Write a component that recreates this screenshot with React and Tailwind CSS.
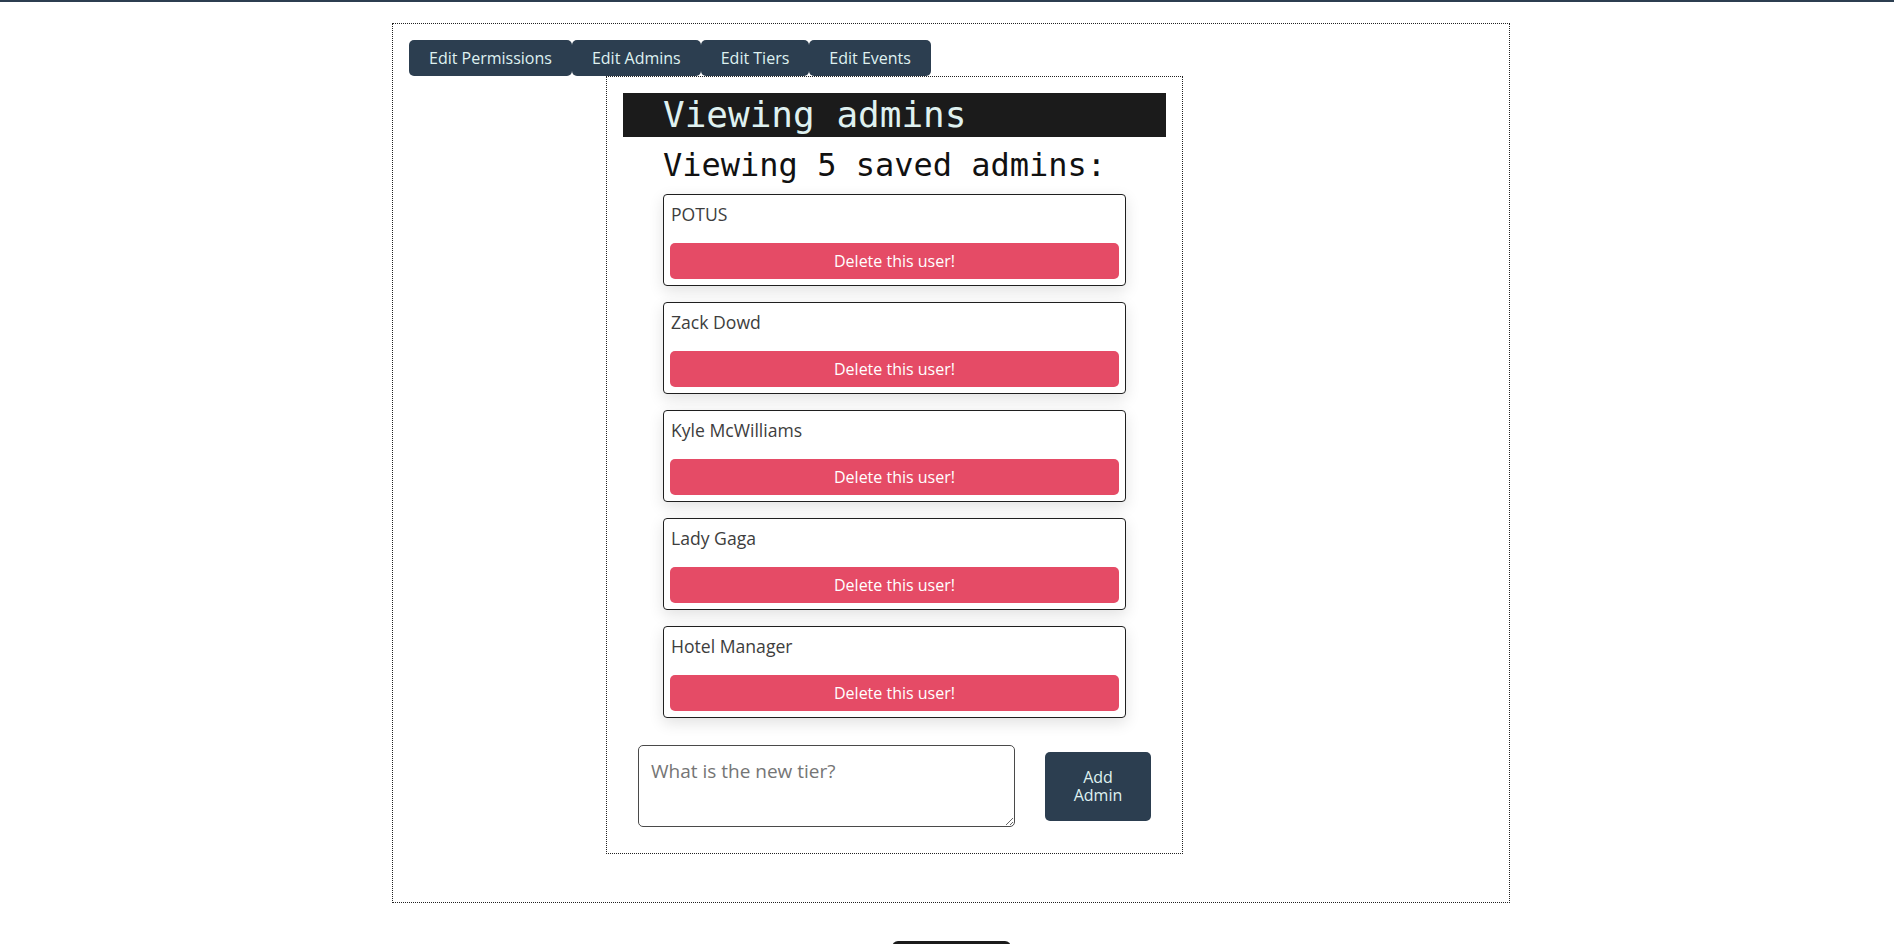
import { useState } from 'react';

const admins = ['POTUS', 'Zack Dowd', 'Kyle McWilliams', 'Lady Gaga', 'Hotel Manager'];
const tabs = ['Edit Permissions', 'Edit Admins', 'Edit Tiers', 'Edit Events'];

const App = () => {
  const [users, setUsers] = useState(admins);
  const [newAdmin, setNewAdmin] = useState('');

  const deleteUser = (name) => setUsers(users.filter(u => u !== name));

  const addAdmin = () => {
    if (!newAdmin.trim()) return;
    setUsers([...users, newAdmin.trim()]);
    setNewAdmin('');
  };

  return (
    <div className="min-h-screen bg-white font-['Open_Sans',sans-serif]">
      <div className="h-[2px] bg-[#2c3e50]" />
      <div className="pl-2">
        <div className="mx-auto mt-[21px] w-[1118px] border border-dotted border-[#222] p-4">
          {/* Tabs */}
          <div className="flex">
            {tabs.map(t => (
              <button key={t} className="h-9 px-5 rounded-[5px] bg-[#2c3e50] text-[16px] text-[#dff1f0]">
                {t}
              </button>
            ))}
          </div>

          <div className="ml-[197px] mb-8 w-[577px] border border-dotted border-[#222] p-4">
            <div className="h-[44px] bg-[#1b1b1b] pl-10 font-['DejaVu_Sans_Mono',monospace] text-[36px] leading-[44px] text-[#dff1f0]">
              Viewing admins
            </div>
            <h2 className="mt-[10px] pl-10 font-['DejaVu_Sans_Mono',monospace] text-[32px] leading-[37px] text-[#111]">
              Viewing {users.length} saved admins:
            </h2>

            <div className="mx-10 mt-[10px] flex flex-col gap-[16px]">
              {users.map(u => (
                <div key={u} className="rounded-[4px] border border-[#1f1f1f] px-[6px] pt-[7px] pb-[6px] shadow-[0_5px_15px_rgba(0,0,0,0.12)]">
                  <div className="pl-px text-[17.6px] leading-[25px] text-[#3d3d3d]">{u}</div>
                  <button
                    onClick={() => deleteUser(u)}
                    className="mt-4 h-9 w-full rounded-[5px] bg-[#e54b66] text-[16px] text-white"
                  >
                    Delete this user!
                  </button>
                </div>
              ))}
            </div>

            {/* Add admin row */}
            <div className="mt-[27px] mb-[10px] flex items-center justify-around">
              <textarea
                value={newAdmin}
                onChange={e => setNewAdmin(e.target.value)}
                placeholder="What is the new tier?"
                className="h-[82px] w-[377px] rounded-[5px] border border-[#4a4a4a] px-3 pt-[12px] pb-[8px] font-['Open_Sans',sans-serif] text-[19px] leading-[26px] text-[#333] placeholder:text-[#757575]"
              />
              <button
                onClick={addAdmin}
                className="h-[69px] w-[106px] rounded-[5px] bg-[#2c3e50] text-[16px] leading-[18px] text-[#dff1f0]"
              >
                Add<br />Admin
              </button>
            </div>
          </div>
        </div>

        <div className="mx-auto mt-[38px] h-10 w-[119px] rounded-t-[6px] bg-[#1b1b1b]" />
      </div>
    </div>
  );
};

export default App;
